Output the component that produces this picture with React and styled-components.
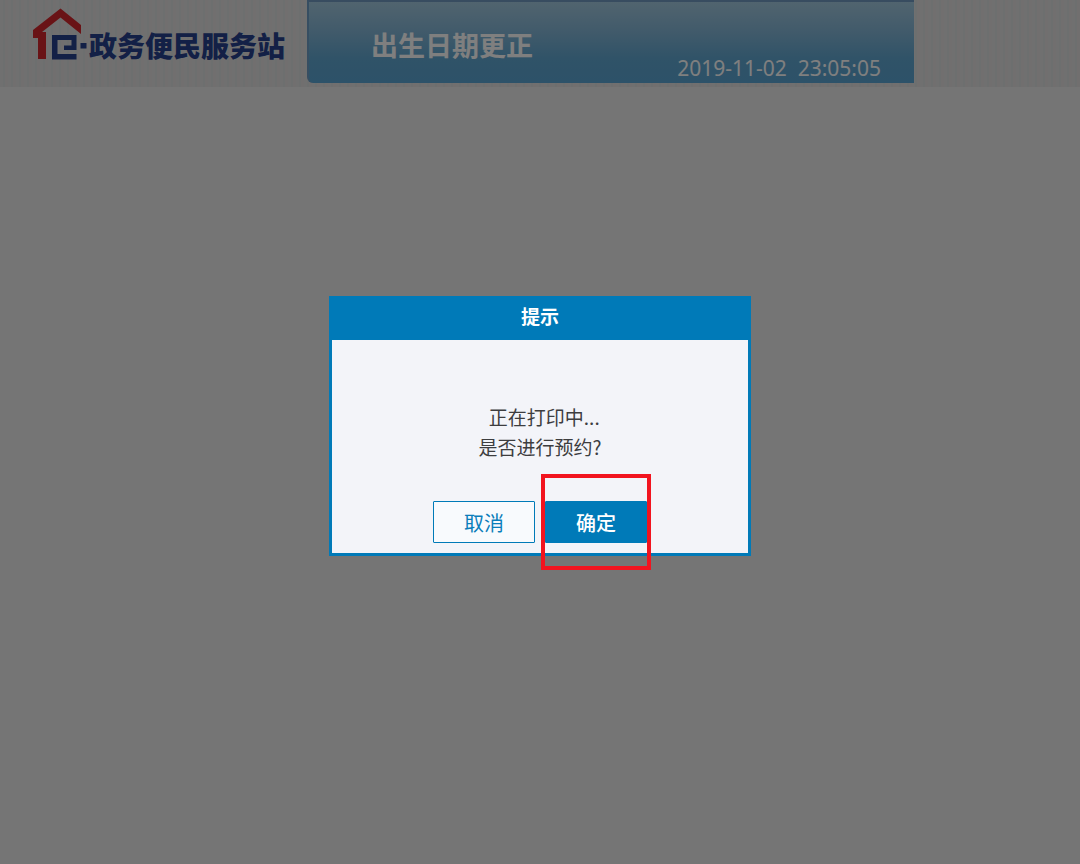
import React from 'react'
import styled, { createGlobalStyle } from 'styled-components';

const GlobalStyle=createGlobalStyle`
  * {
    box-sizing: border-box;
  }
  body {
    margin: 0;
    background: #ebebeb;
    font-family: "Noto Sans", "Noto Sans CJK SC", sans-serif;
  }
`;

const Page=styled.div`
  min-height: 100vh;
`;

const Header=styled.header`
  display: grid;
  grid-template-columns: 307px 1fr 166px;
  align-items: start;
  height: 87px;
  background: repeating-linear-gradient(90deg, #e0e0e0 0 3px, #dadede 3px 5px, #e2dfde 5px 8px);
`;

const Brand=styled.div`
  display: flex;
  align-items: flex-start;
  padding: 8px 0 0 32px;
`;

const BrandName=styled.span`
  margin: 23px 0 0 1px;
  color: #26408c;
  font-family: "Noto Sans CJK SC", sans-serif;
  font-size: 28px;
  font-weight: 900;
  line-height: 28px;
  white-space: nowrap;
`;

const Banner=styled.div`
  display: flex;
  flex-direction: column;
  justify-content: flex-end;
  height: 83px;
  padding: 0 33px 5px 62px;
  border-top: 2px solid #7199c0;
  border-left: 2px solid #6f9cc4;
  border-bottom-left-radius: 6px;
  background: linear-gradient(#a2c8de, #84b6d6 35%, #60a6d0 70%, #5aa4d2);
  color: #fff;
`;

const Heading=styled.h1`
  margin: 0;
  font-family: "Noto Sans CJK SC", sans-serif;
  font-size: 27px;
  font-weight: 700;
  line-height: 26px;
`;

const Clock=styled.time`
  align-self: flex-end;
  font-size: 21px;
  line-height: 20px;
  white-space: pre;
`;

const Backdrop=styled.div`
  position: fixed;
  inset: 0;
  display: flex;
  align-items: center;
  justify-content: center;
  padding-bottom: 12px;
  background: rgba(0, 0, 0, 0.5);
`;

const Dialog=styled.section`
  width: 100%;
  max-width: 422px;
  border: 3px solid #007ab8;
  background: #f3f4f9;
  font-family: "Noto Sans CJK SC", sans-serif;
  text-align: center;
`;

const DialogTitle=styled.h2`
  margin: 0;
  padding: 3px 0 10px;
  background: #007ab8;
  color: #fff;
  font-size: 19px;
  font-weight: 700;
  line-height: 28px;
`;

const Message=styled.p`
  margin: 0;
  padding: 62px 0 39px;
  color: #3d3d3f;
  font-size: 19px;
  line-height: 30px;
`;

const Actions=styled.div`
  display: flex;
  justify-content: center;
  gap: 10px;
  padding-bottom: 10px;
`;

const Button=styled.button`
  width: 102px;
  height: 42px;
  padding: 0;
  border: 1px solid #007ab8;
  border-radius: 1px;
  background: ${({ $primary }) => ($primary ? '#007ab8' : '#f8fafd')};
  color: ${({ $primary }) => ($primary ? '#fff' : '#0a7dba')};
  font-family: inherit;
  font-size: 20px;
  font-weight: ${({ $primary }) => ($primary ? 500 : 400)};
  cursor: pointer;
`;

const Highlight=styled.div`
  position: relative;

  &::after {
    content: '';
    position: absolute;
    inset: -27px -4px;
    border: 4px solid #f2141f;
    pointer-events: none;
  }
`;

const HouseLogo = () => (
  <svg width="56" height="54" viewBox="0 0 56 54" aria-hidden="true">
    <path fill="#d2272c" d="M1 22 L28.500 .5 L49 17 V26 L28.500 9.500 L10 24 H14 V51 H6 V30 H1 Z" />
    {/* squared letter e */}
    <path fill="#26408c" d="M20 27 H44.500 V42 H32 V37.500 H39.500 V32 H25.500 V46 H44.500 V51.500 H20 Z" />
    <rect x="48.500" y="35" width="6" height="5.500" fill="#26408c" />
  </svg>
)

const App = () => {
  return (
    <Page>
      <GlobalStyle/>
      <Header>
        <Brand>
          <HouseLogo/>
          <BrandName>政务便民服务站</BrandName>
        </Brand>
        <Banner>
          <Heading>出生日期更正</Heading>
          <Clock dateTime="2019-11-02T23:05:05">{'2019-11-02  23:05:05'}</Clock>
        </Banner>
      </Header>

      <Backdrop>
        <Dialog role="dialog" aria-modal="true" aria-labelledby="dialog-title">
          <DialogTitle id="dialog-title">提示</DialogTitle>
          <Message>
            &nbsp;&nbsp;正在打印中...<br/>
            是否进行预约?
          </Message>
          <Actions>
            <Button type="button">取消</Button>
            <Highlight>
              <Button type="button" $primary>确定</Button>
            </Highlight>
          </Actions>
        </Dialog>
      </Backdrop>
    </Page>
  )
}

export default App
